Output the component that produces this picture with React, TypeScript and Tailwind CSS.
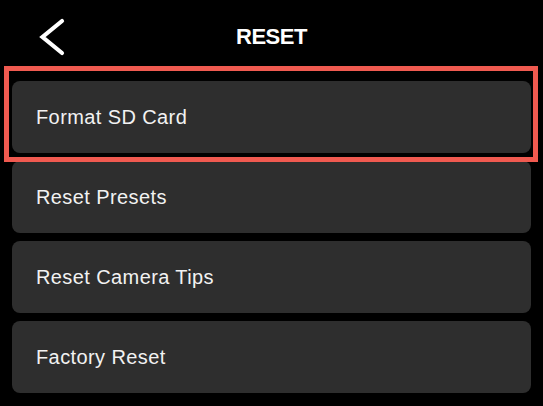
const items = ["Format SD Card", "Reset Presets", "Reset Camera Tips", "Factory Reset"];

export default function App() {
  return (
    <div className="relative w-[543px] h-[406px] bg-black text-[#f2f2f2] overflow-hidden font-['Liberation_Sans',Arial,sans-serif]">
      <header className="h-[73px] mb-[8px] grid grid-cols-[1fr_auto_1fr] items-center">
        <button className="pl-[37px] flex items-center" aria-label="Back">
          <svg width="30" height="40" viewBox="0 0 30 40" fill="none">
            <path d="M25 4 L5.5 20 L25 36" stroke="#ffffff" strokeWidth="4.2" strokeLinecap="round" strokeLinejoin="miter" />
          </svg>
        </button>
        <h1 className="text-[22px] font-bold tracking-[-0.5px] text-white">RESET</h1>
        <div />
      </header>

      <ul className="px-3 flex flex-col gap-2">
        {items.map((label) => (
          <li
            key={label}
            className="h-[72px] rounded-lg bg-[#2e2e2e] flex items-center pl-6 text-[20px] tracking-[0.4px]"
          >
            {label}
          </li>
        ))}
      </ul>

      {/* highlight annotation */}
      <div className="absolute left-[4px] top-[66px] w-[534px] h-[96px] border-[5px] border-[#f05a50] pointer-events-none" />
    </div>
  );
}
